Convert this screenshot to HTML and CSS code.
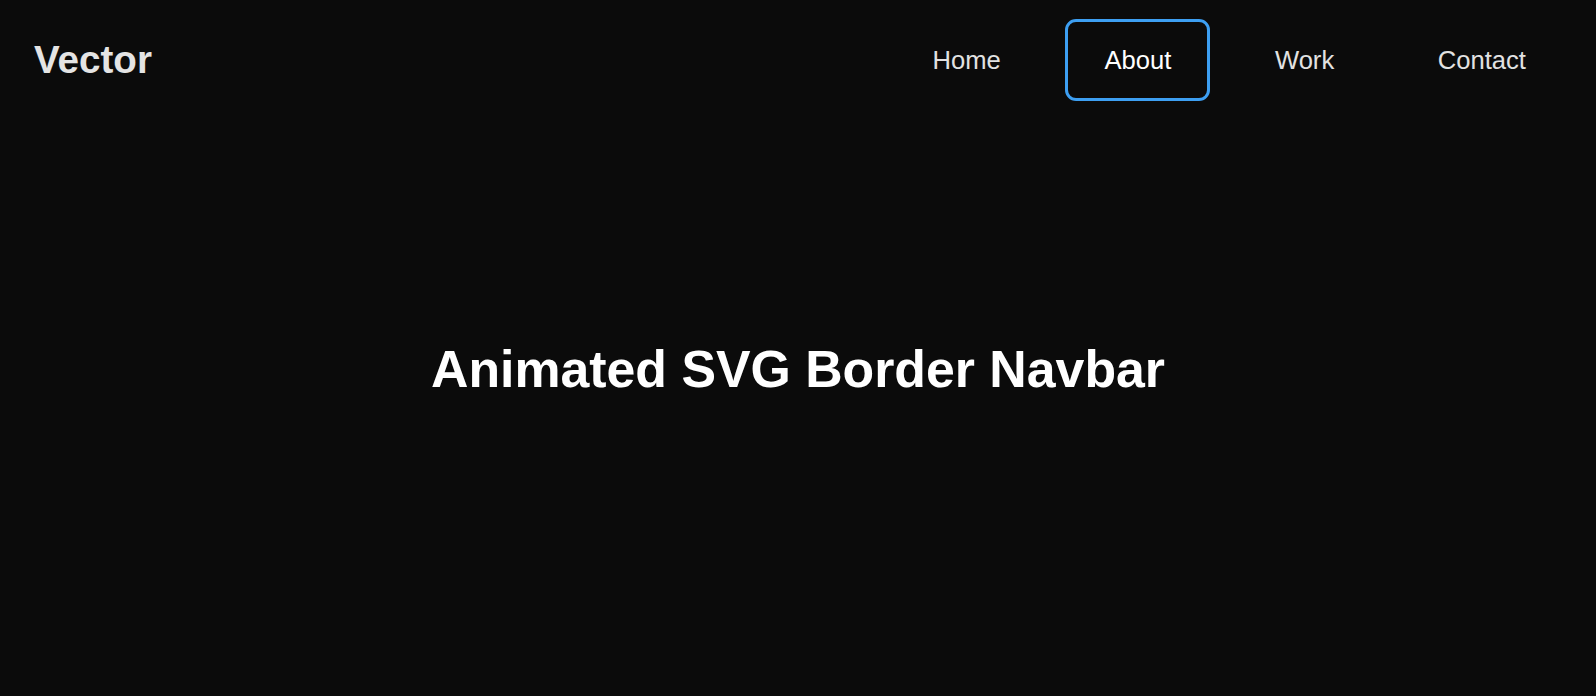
FILE: index.html
```html
<!DOCTYPE html>
<html lang="en">
<head>
<meta charset="utf-8">
<title>Animated SVG Border Navbar</title>
<link rel="stylesheet" href="styles.css">
</head>
<body>
<header class="header">
  <a class="logo" href="#">Vector</a>
  <nav>
    <ul class="nav">
      <li><a class="nav-link" href="#">Home</a></li>
      <li><a class="nav-link active" href="#">About</a></li>
      <li><a class="nav-link" href="#">Work</a></li>
      <li><a class="nav-link" href="#">Contact</a></li>
    </ul>
  </nav>
</header>
<main class="hero">
  <h1 class="title">Animated SVG Border Navbar</h1>
</main>
</body>
</html>
```
FILE: styles.css
```css
* { box-sizing: border-box; }
html, body {
  margin: 0;
  padding: 0;
  background: #0b0b0b;
  font-family: "Liberation Sans", Arial, Helvetica, sans-serif;
  height: 100%;
  overflow: hidden;
}
.header {
  display: flex;
  justify-content: space-between;
  align-items: center;
  padding: 19px 31px 19px 34px;
}
.logo {
  color: #e4e4e4;
  font-weight: 700;
  font-size: 38.6px;
  text-decoration: none;
}
.nav {
  list-style: none;
  margin: 0;
  padding: 0;
  display: flex;
  gap: 25.6px;
}
.nav-link {
  display: block;
  color: #e2e2e2;
  font-size: 25.6px;
  text-decoration: none;
  padding: 23.5px 36px;
  border: 3px solid transparent;
  border-radius: 11px;
}
.nav-link.active {
  color: #ffffff;
  border-color: #3d9ff2;
}
.hero {
  padding-top: 219px;
  text-align: center;
}
.title {
  margin: 0;
  color: #ffffff;
  font-weight: 700;
  font-size: 51.8px;
}
```
